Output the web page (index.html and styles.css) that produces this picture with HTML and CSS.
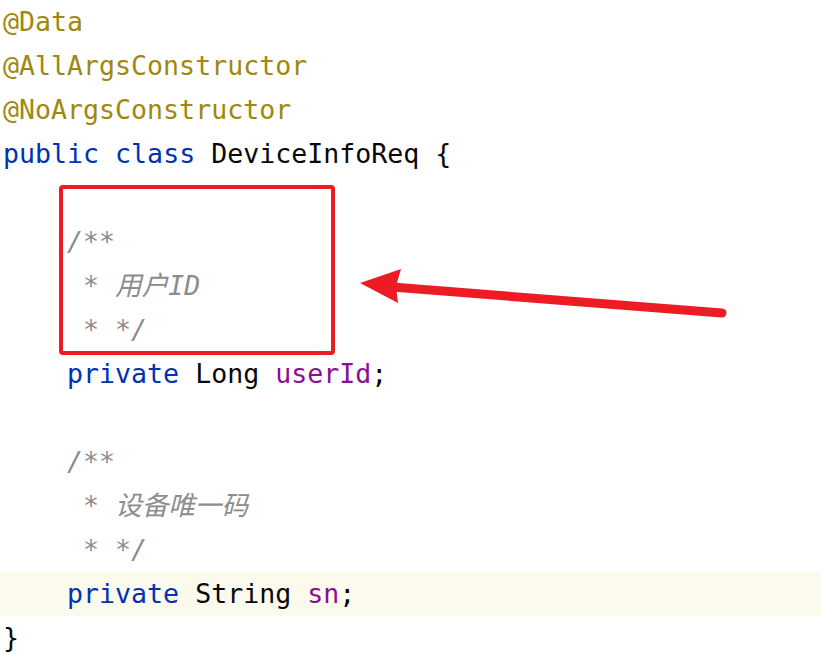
FILE: index.html
```html
<!DOCTYPE html>
<html>
<head>
<meta charset="utf-8">
<link rel="stylesheet" href="styles.css">
</head>
<body>
<div class="editor">
  <div class="code">
    <div class="line"><span class="ann">@Data</span></div>
    <div class="line"><span class="ann">@AllArgsConstructor</span></div>
    <div class="line"><span class="ann">@NoArgsConstructor</span></div>
    <div class="line"><span class="kw">public</span> <span class="kw">class</span> DeviceInfoReq {</div>
    <div class="line"> </div>
    <div class="line">    <span class="cm">/**</span></div>
    <div class="line">    <span class="cm"> * 用户ID</span></div>
    <div class="line">    <span class="cm"> * */</span></div>
    <div class="line">    <span class="kw">private</span> Long <span class="fld">userId</span>;</div>
    <div class="line"> </div>
    <div class="line">    <span class="cm">/**</span></div>
    <div class="line">    <span class="cm"> * 设备唯一码</span></div>
    <div class="line">    <span class="cm"> * */</span></div>
    <div class="line current">    <span class="kw">private</span> String <span class="fld">sn</span>;</div>
    <div class="line">}</div>
  </div>
  <svg class="markup" width="821" height="661" viewBox="0 0 821 661">
    <rect x="61" y="187" width="272" height="166" rx="2" ry="2" fill="none" stroke="#ED1C24" stroke-width="4"/>
    <line x1="722" y1="313" x2="392" y2="287" stroke="#ED1C24" stroke-width="9" stroke-linecap="round"/>
    <polygon points="360,283 401,269 396,286 398,303" fill="#ED1C24"/>
  </svg>
</div>
</body>
</html>
```
FILE: styles.css
```css
html, body {
  margin: 0;
  padding: 0;
  background: #ffffff;
}
.editor {
  position: relative;
  width: 821px;
  height: 661px;
  overflow: hidden;
}
.code {
  font-family: "DejaVu Sans Mono", "Noto Sans CJK SC", monospace;
  font-size: 26.6px;
  color: #080808;
}
.line {
  height: 44px;
  line-height: 44px;
  padding-left: 3px;
  white-space: pre;
}
.current {
  background: #FCFAED;
}
.ann { color: #9E880D; }
.kw { color: #0033B3; }
.fld { color: #871094; }
.cm {
  color: #8C8C8C;
  font-style: italic;
}
.markup {
  position: absolute;
  left: 0;
  top: 0;
  pointer-events: none;
}
```
